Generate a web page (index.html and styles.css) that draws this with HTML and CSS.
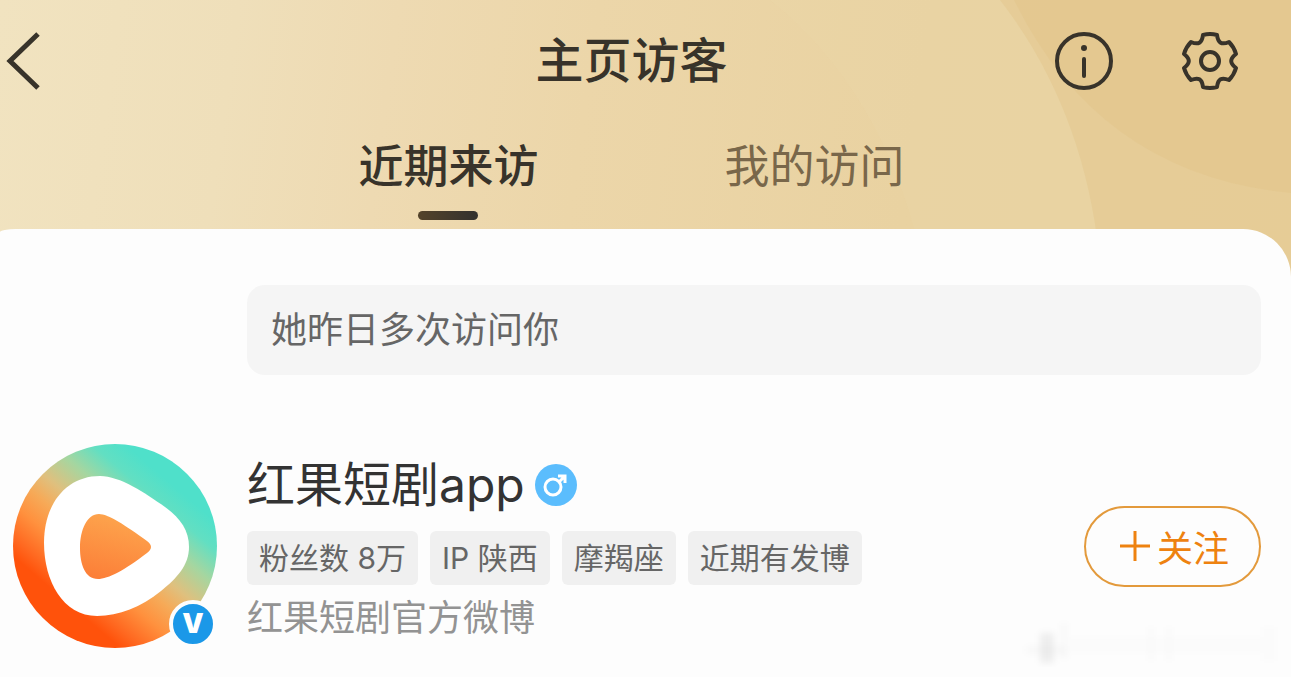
FILE: index.html
```
<!DOCTYPE html>
<html lang="zh-CN">
  <head>
    <meta charset="UTF-8" />
    <meta name="viewport" content="width=device-width, initial-scale=1" />
    <title>主页访客</title>

    <link rel="stylesheet" href="styles.css">
  </head>

  <body>
    <header class="header">
      <svg class="header-art" viewBox="0 0 1291 290" preserveAspectRatio="xMaxYMin slice" aria-hidden="true">
        <path class="art-soft" d="M770 0 Q895 100 928 290 H1291 V0Z" />
        <path class="art-deep" d="M1000 0 Q1093 120 1102 290 H1291 V0Z" />
        <path class="art-deep" d="M1014 0 Q1100 175 1291 193 V0Z" />
      </svg>

      <div class="bar">
        <a href="#" class="back" aria-label="返回">
          <svg width="48" height="60" viewBox="0 0 48 60">
            <path d="M38 3 L10 30 L38 57" fill="none" stroke="currentColor" stroke-width="5" />
          </svg>
        </a>
        <h1 class="title">主页访客</h1>
        <div class="actions">
          <button type="button" class="icon-btn" aria-label="说明">
            <svg width="60" height="60" viewBox="-30 -30 60 60">
              <circle r="27" fill="none" stroke="currentColor" stroke-width="4" />
              <circle cy="-13" r="3" fill="currentColor" />
              <path d="M0 -2 V15" stroke="currentColor" stroke-width="4" stroke-linecap="round" />
            </svg>
          </button>
          <button type="button" class="icon-btn" aria-label="设置">
            <svg width="60" height="60" viewBox="-30 -30 60 60" fill="none" stroke="currentColor" stroke-width="4" stroke-linejoin="round">
              <path d="M-7 -26 Q0 -28 7 -26 C8 -18 11.6 -15.9 19 -19 Q24 -14 26 -7 C19.6 -2.1 19.6 2.1 26 7 Q24 14 19 19 C11.6 15.9 8 18 7 26 Q0 28 -7 26 C-8 18 -11.6 15.9 -19 19 Q-24 14 -26 7 C-19.6 2.1 -19.6 -2.1 -26 -7 Q-24 -14 -19 -19 C-11.6 -15.9 -8 -18 -7 -26Z" />
              <circle r="9" />
            </svg>
          </button>
        </div>
      </div>

      <nav class="tabs">
        <a href="#" class="tab active">近期来访</a>
        <a href="#" class="tab">我的访问</a>
      </nav>
    </header>

    <main class="sheet">
      <p class="notice">她昨日多次访问你</p>

      <div class="avatar">
        <svg class="avatar-img" viewBox="0 0 204 204" role="img" aria-label="红果短剧app">
          <defs>
            <linearGradient id="ring" gradientUnits="userSpaceOnUse" x1="37" y1="178" x2="167" y2="26">
              <stop offset="0.13" stop-color="#ff520b" />
              <stop offset="0.2" stop-color="#ff6820" />
              <stop offset="0.33" stop-color="#ff913e" />
              <stop offset="0.44" stop-color="#f6aa58" />
              <stop offset="0.54" stop-color="#dfc07e" />
              <stop offset="0.68" stop-color="#a5d6a0" />
              <stop offset="0.81" stop-color="#62dfc2" />
              <stop offset="0.92" stop-color="#4fe0ca" />
            </linearGradient>
            <linearGradient id="play" x1="0.6" y1="0" x2="0.3" y2="1">
              <stop offset="0" stop-color="#fda64e" />
              <stop offset="1" stop-color="#fc7f38" />
            </linearGradient>
          </defs>
          <circle cx="102" cy="102" r="102" fill="url(#ring)" />
          <path fill="#fff" d="M87 32 C107 32 132 49 152 63 C167 74 176 86 176 103 C176 121 164 134 148 147 C128 163 106 172 84 172 C50 172 31 137 31 99 C31 60 53 32 87 32Z" />
          <path fill="url(#play)" d="M86 70 C95 70 112 81 134 97 Q142 103 134 109 C112 126 95 135 85 135 C72 135 67 120 67 104 C67 86 74 70 86 70Z" />
        </svg>
        <span class="verified">V</span>
      </div>

      <div class="info">
        <h2 class="name">
          红果短剧app
          <svg class="gender" width="42" height="42" viewBox="0 0 42 42" role="img" aria-label="男">
            <circle cx="21" cy="21" r="21" fill="#5bbdfd" />
            <g fill="none" stroke="#fff" stroke-width="3">
              <circle cx="18" cy="23" r="8" />
              <path d="M24 18 L30 12 M23 12 H30 V19" />
            </g>
          </svg>
        </h2>
        <ul class="tags">
          <li>粉丝数 8万</li>
          <li>IP 陕西</li>
          <li>摩羯座</li>
          <li>近期有发博</li>
        </ul>
        <p class="desc">红果短剧官方微博</p>
      </div>

      <button type="button" class="follow">
        <svg width="30" height="30" viewBox="0 0 30 30" aria-hidden="true">
          <path d="M15 0 V30 M0 15 H30" stroke="currentColor" stroke-width="3" />
        </svg>
        关注
      </button>
    </main>

    <!-- faded watermark in the corner -->
    <svg class="watermark" width="281" height="56" viewBox="0 0 281 56" aria-hidden="true">
      <defs>
        <filter id="soft"><feGaussianBlur stdDeviation="3" /></filter>
      </defs>
      <g filter="url(#soft)" fill="#000">
        <rect x="30" y="14" width="14" height="30" opacity="0.06" />
        <rect x="16" y="27" width="40" height="8" opacity="0.02" />
        <rect x="51" y="4" width="6" height="36" opacity="0.02" />
        <rect x="60" y="18" width="190" height="16" opacity="0.006" />
        <rect x="138" y="8" width="6" height="34" opacity="0.012" />
        <rect x="156" y="8" width="6" height="34" opacity="0.012" />
        <rect x="252" y="8" width="14" height="34" opacity="0.008" />
      </g>
    </svg>
  </body>
</html>
```

FILE: styles.css
```
* {
  box-sizing: border-box;
}

body {
  margin: 0;
  min-height: 100vh;
  position: relative;
  background-color: #fdfdfd;
  font-family: Inter, "Noto Sans CJK SC", sans-serif;
  color: #333;
}

h1,
h2,
p,
ul {
  margin: 0;
  padding: 0;
}

a {
  color: inherit;
  text-decoration: none;
}

button {
  padding: 0;
  border: none;
  background: none;
  color: inherit;
  font-family: inherit;
  cursor: pointer;
}

svg {
  display: block;
  flex-shrink: 0;
}

.header {
  position: relative;
  padding: 0 28px 60px 0;
  margin-bottom: -60px;
  background: linear-gradient(98deg, #f1e3c0 0%, #efdfba 18%, #eedab2 30%, #ecd6a9 45%, #e9d2a1 70%, #e8d09e 100%);
  color: #38332a;
}

.header-art {
  position: absolute;
  top: 0;
  left: 0;
  width: 100%;
  height: 100%;
}

.art-soft {
  fill: #ecd8aa;
  opacity: 0.3;
}

.art-deep {
  fill: #e2c288;
  opacity: 0.4;
}

.bar {
  position: relative;
  display: grid;
  grid-template-columns: 1fr auto 1fr;
  align-items: center;
  height: 122px;
}

.back {
  justify-self: start;
}

.title {
  font-size: 48px;
  font-weight: 500;
  line-height: 72px;
}

.actions {
  display: flex;
  justify-content: flex-end;
  gap: 66px;
  padding-right: 23px;
}

.tabs {
  position: relative;
  display: flex;
  justify-content: center;
  gap: 186px;
  height: 107px;
}

.tab {
  display: flex;
  flex-direction: column;
  align-items: center;
  font-size: 45px;
  line-height: 89px;
  color: #79674a;
}

.tab.active {
  font-weight: 500;
  color: #38332a;
}

.tab.active::after {
  content: "";
  width: 60px;
  height: 9px;
  border-radius: 5px;
  background: linear-gradient(90deg, #54432a, #33312e);
}

.sheet {
  position: relative;
  display: grid;
  grid-template-columns: 204px 1fr auto;
  align-items: center;
  column-gap: 30px;
  row-gap: 69px;
  padding: 56px 30px 28px 13px;
  background-color: #fdfdfd;
  border-radius: 16px 48px 0 0 / 3px 48px 0 0;
}

.notice {
  grid-column: 2 / -1;
  padding: 18px 24px;
  border-radius: 18px;
  background-color: #f5f5f5;
  font-size: 36px;
  line-height: 54px;
  color: #666;
}

.avatar {
  position: relative;
}

.verified {
  position: absolute;
  right: 0;
  bottom: 0;
  width: 48px;
  height: 48px;
  border: 4px solid #fdfdfd;
  border-radius: 50%;
  background-color: #1b98e8;
  color: #fff;
  font-size: 27px;
  font-weight: 900;
  line-height: 40px;
  text-align: center;
}

.name {
  display: flex;
  align-items: center;
  gap: 10px;
  margin-bottom: 10px;
  font-size: 48px;
  font-weight: 400;
  line-height: 72px;
}

.tags {
  display: flex;
  flex-wrap: wrap;
  gap: 12px;
  margin-bottom: 8px;
  list-style: none;
}

.tags li {
  padding: 0 12px;
  border-radius: 6px;
  background-color: #f0f0f0;
  font-size: 30px;
  line-height: 54px;
  color: #666;
}

.desc {
  font-size: 36px;
  line-height: 50px;
  color: #939393;
}

.follow {
  display: flex;
  align-items: center;
  gap: 7px;
  height: 81px;
  padding: 0 30px 0 34px;
  border: 2px solid #e39a3c;
  border-radius: 41px;
  font-family: "Noto Sans CJK SC", sans-serif;
  font-size: 36px;
  color: #ee8210;
}

.watermark {
  position: absolute;
  right: 0;
  bottom: 2px;
}
```
